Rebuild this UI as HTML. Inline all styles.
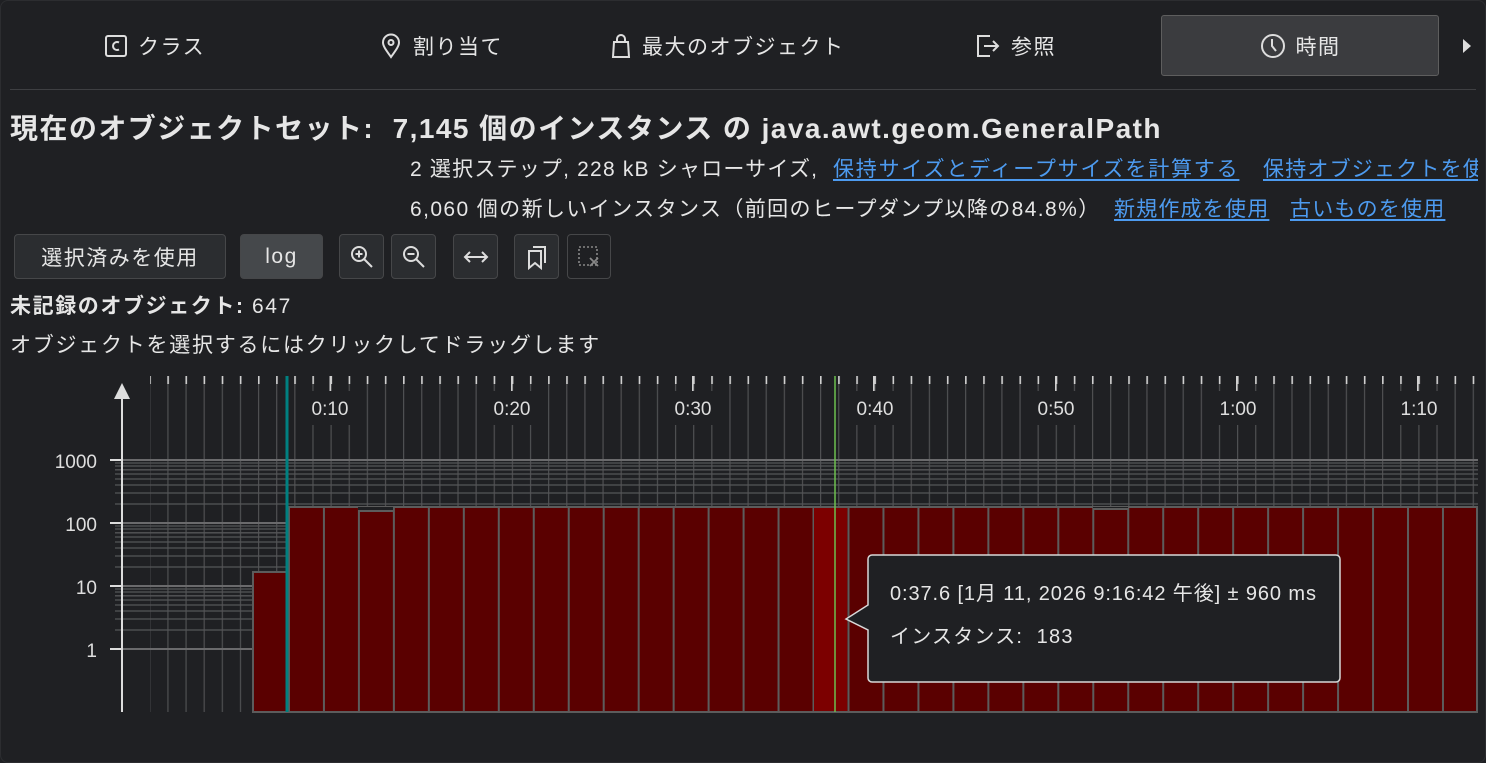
<!DOCTYPE html>
<html><head><meta charset="utf-8"><style>
html,body{margin:0;padding:0;background:#1f2023;}
body{width:1486px;height:763px;overflow:hidden;position:relative;font-family:"Liberation Sans","Noto Sans CJK JP",sans-serif;color:#e6e6e6;}
.abs{position:absolute;white-space:nowrap;}
.tab{position:absolute;top:15px;height:61px;display:flex;align-items:center;font-size:21px;letter-spacing:1.5px;color:#e6e6e6;}
.tab svg{margin-right:10px}
.sel{left:1161px;width:278px;background:#3b3c3f;border:1px solid #5e5e5e;border-radius:3px;justify-content:center;box-sizing:border-box;}
a{color:#4d9bf0;text-decoration:underline;text-underline-offset:3px;}
.t{font-size:21px;letter-spacing:1.2px;}
.btn{position:absolute;top:234px;height:45px;box-sizing:border-box;background:#2b2d30;border:1px solid #464749;border-radius:4px;display:flex;align-items:center;justify-content:center;font-size:21px;letter-spacing:1.5px;color:#e6e6e6;}
</style></head><body>
<div style="position:absolute;inset:0;border:1px solid #2c2d30;border-radius:8px;"></div>

<div class="tab" style="left:104px"><svg width="24" height="24" viewBox="0 0 24 24"><rect x="2" y="2" width="20" height="20" rx="2" fill="none" stroke="#ddd" stroke-width="2"/><path d="M15 8.5a4 4 0 1 0 0 7" fill="none" stroke="#ddd" stroke-width="2"/></svg>クラス</div>
<div class="tab" style="left:379px"><svg width="24" height="26" viewBox="0 0 24 26"><path d="M12 24C7 17 4 13 4 9.5a8 8 0 0 1 16 0C20 13 17 17 12 24z" fill="none" stroke="#ddd" stroke-width="2"/><circle cx="12" cy="9.5" r="2.5" fill="none" stroke="#ddd" stroke-width="2"/></svg>割り当て</div>
<div class="tab" style="left:610px"><svg width="22" height="26" viewBox="0 0 22 26"><path d="M4 9h14l1 15H3z" fill="none" stroke="#ddd" stroke-width="2"/><path d="M7 9V6a4 4 0 0 1 8 0v3" fill="none" stroke="#ddd" stroke-width="2"/></svg>最大のオブジェクト</div>
<div class="tab" style="left:975px"><svg width="26" height="24" viewBox="0 0 26 24"><path d="M15 2H3v20h12" fill="none" stroke="#ddd" stroke-width="2"/><path d="M9 12h14M18 7l5 5-5 5" fill="none" stroke="#ddd" stroke-width="2"/></svg>参照</div>
<div class="tab sel"><svg width="26" height="26" viewBox="0 0 26 26"><circle cx="13" cy="13" r="11" fill="none" stroke="#ddd" stroke-width="2"/><path d="M12 6v7l4 5" fill="none" stroke="#ddd" stroke-width="2"/></svg>時間</div>
<svg class="abs" style="left:1462px;top:38px" width="10" height="16"><path d="M1 1l8 7-8 7z" fill="#ddd"/></svg>
<div class="abs" style="left:10px;top:89px;width:1466px;height:1px;background:#3e3f42"></div>

<div class="abs" style="left:10px;top:107px;font-size:28px;letter-spacing:1.45px;font-weight:bold;">現在のオブジェクトセット:&nbsp; 7,145 個のインスタンス の java.awt.geom.GeneralPath</div>
<div class="abs t" style="left:410px;top:153px;">2 選択ステップ, 228 kB シャローサイズ,</div>
<div class="abs t" style="left:833px;top:153px;letter-spacing:1.8px;"><a>保持サイズとディープサイズを計算する</a></div>
<div class="abs t" style="left:1263px;top:153px;width:215px;overflow:hidden;"><a>保持オブジェクトを使用</a></div>
<div class="abs t" style="left:410px;top:193px;letter-spacing:1.4px;">6,060 個の新しいインスタンス（前回のヒープダンプ以降の84.8%）</div>
<div class="abs t" style="left:1114px;top:193px;"><a>新規作成を使用</a></div>
<div class="abs t" style="left:1290px;top:193px;"><a>古いものを使用</a></div>

<div class="btn" style="left:14px;width:212px;">選択済みを使用</div>
<div class="btn" style="left:240px;width:83px;background:#45484b;">log</div>
<div class="btn" style="left:339px;width:45px;"><svg width="26" height="26" viewBox="0 0 26 26"><circle cx="10" cy="10" r="7" fill="none" stroke="#ddd" stroke-width="2"/><path d="M15 15l8 8M6.5 10h7M10 6.5v7" stroke="#ddd" stroke-width="2"/></svg></div>
<div class="btn" style="left:391px;width:45px;"><svg width="26" height="26" viewBox="0 0 26 26"><circle cx="10" cy="10" r="7" fill="none" stroke="#ddd" stroke-width="2"/><path d="M15 15l8 8M6.5 10h7" stroke="#ddd" stroke-width="2"/></svg></div>
<div class="btn" style="left:453px;width:45px;"><svg width="26" height="14" viewBox="0 0 26 14"><path d="M2 7h22M7 2L2 7l5 5M19 2l5 5-5 5" fill="none" stroke="#ddd" stroke-width="2"/></svg></div>
<div class="btn" style="left:514px;width:45px;"><svg width="22" height="26" viewBox="0 0 22 26"><path d="M3 7h12v17l-6-5-6 5z" fill="none" stroke="#ddd" stroke-width="2"/><path d="M7 3h12v16" fill="none" stroke="#ddd" stroke-width="2"/></svg></div>
<div class="btn" style="left:567px;width:44px;background:#1f2023;"><svg width="26" height="26" viewBox="0 0 26 26"><rect x="3" y="3" width="18" height="18" fill="none" stroke="#888" stroke-width="1.6" stroke-dasharray="2 2"/><path d="M14 14l8 8M22 14l-8 8" stroke="#888" stroke-width="1.8"/></svg></div>

<div class="abs t" style="left:10px;top:290px;letter-spacing:1.6px;"><b>未記録のオブジェクト:</b> 647</div>
<div class="abs t" style="left:10px;top:329px;letter-spacing:1.75px;">オブジェクトを選択するにはクリックしてドラッグします</div>

<svg class="abs" style="left:0;top:0" width="1486" height="763">
<defs>
<pattern id="vg" patternUnits="userSpaceOnUse" x="149.2" y="0" width="18.13" height="763"><rect x="0" y="0" width="1.2" height="763" fill="#4f5052"/></pattern>
<pattern id="vt" patternUnits="userSpaceOnUse" x="149.2" y="0" width="18.13" height="763"><rect x="0" y="0" width="1.6" height="763" fill="#d0d0d0"/></pattern>
<pattern id="bars" patternUnits="userSpaceOnUse" x="253" y="0" width="34.97" height="763"><rect width="34.97" height="763" fill="#5a0000"/><rect width="2" height="763" fill="#5c5c5c"/></pattern>
</defs>
<rect x="150" y="376" width="1328" height="336" fill="url(#vg)"/>
<rect x="150" y="376" width="1328" height="8" fill="url(#vt)"/>
<rect x="300" y="391" width="60" height="34" fill="#1f2023"/>
<rect x="482" y="391" width="60" height="34" fill="#1f2023"/>
<rect x="663" y="391" width="60" height="34" fill="#1f2023"/>
<rect x="844" y="391" width="60" height="34" fill="#1f2023"/>
<rect x="1026" y="391" width="60" height="34" fill="#1f2023"/>
<rect x="1207" y="391" width="62" height="34" fill="#1f2023"/>
<rect x="1388" y="391" width="60" height="34" fill="#1f2023"/>
<g fill="#d0d0d0"><rect x="329.5" y="376" width="1.6" height="15"/><rect x="511" y="376" width="1.6" height="15"/><rect x="692" y="376" width="1.6" height="15"/><rect x="873" y="376" width="1.6" height="15"/><rect x="1055" y="376" width="1.6" height="15"/><rect x="1236" y="376" width="1.6" height="15"/><rect x="1417" y="376" width="1.6" height="15"/></g>
<g fill="#dedede" font-size="19" text-anchor="middle" font-family="Liberation Sans,sans-serif">
<text x="330" y="415">0:10</text><text x="512" y="415">0:20</text><text x="693" y="415">0:30</text><text x="875" y="415">0:40</text><text x="1056" y="415">0:50</text><text x="1238" y="415">1:00</text><text x="1419" y="415">1:10</text>
</g>
<g stroke="#555658" stroke-width="1.3">
<line x1="115" x2="1478" y1="463" y2="463"/><line x1="115" x2="1478" y1="466" y2="466"/><line x1="115" x2="1478" y1="469.8" y2="469.8"/><line x1="115" x2="1478" y1="474" y2="474"/><line x1="115" x2="1478" y1="479" y2="479"/><line x1="115" x2="1478" y1="485" y2="485"/><line x1="115" x2="1478" y1="493" y2="493"/><line x1="115" x2="1478" y1="504" y2="504"/>
<line x1="115" x2="1478" y1="526" y2="526"/><line x1="115" x2="1478" y1="529" y2="529"/><line x1="115" x2="1478" y1="532.8" y2="532.8"/><line x1="115" x2="1478" y1="537" y2="537"/><line x1="115" x2="1478" y1="542" y2="542"/><line x1="115" x2="1478" y1="548" y2="548"/><line x1="115" x2="1478" y1="556" y2="556"/><line x1="115" x2="1478" y1="567" y2="567"/>
<line x1="115" x2="1478" y1="589" y2="589"/><line x1="115" x2="1478" y1="592" y2="592"/><line x1="115" x2="1478" y1="595.8" y2="595.8"/><line x1="115" x2="1478" y1="600" y2="600"/><line x1="115" x2="1478" y1="605" y2="605"/><line x1="115" x2="1478" y1="611" y2="611"/><line x1="115" x2="1478" y1="619" y2="619"/><line x1="115" x2="1478" y1="630" y2="630"/>
</g>
<g stroke="#6a6a6c" stroke-width="2"><line x1="115" x2="1478" y1="460" y2="460"/><line x1="115" x2="1478" y1="523" y2="523"/><line x1="115" x2="1478" y1="586" y2="586"/><line x1="115" x2="1478" y1="649" y2="649"/></g>
<g stroke="#dddddd" stroke-width="2"><line x1="110" x2="122" y1="460" y2="460"/><line x1="110" x2="122" y1="523" y2="523"/><line x1="110" x2="122" y1="586" y2="586"/><line x1="110" x2="122" y1="649" y2="649"/></g>
<rect x="288" y="507" width="1189" height="205" fill="url(#bars)" stroke="#5c5c5c" stroke-width="2"/>
<rect x="358" y="507" width="35" height="4" fill="#1f2023"/>
<line x1="358" x2="393" y1="511" y2="511" stroke="#5c5c5c" stroke-width="2"/>
<rect x="1093" y="507" width="35" height="2" fill="#1f2023"/>
<line x1="1093" x2="1128" y1="509" y2="509" stroke="#5c5c5c" stroke-width="2"/>
<rect x="253" y="572" width="35" height="140" fill="#5a0000" stroke="#5c5c5c" stroke-width="2"/>
<rect x="814" y="508" width="33" height="203" fill="#7c0000"/>
<line x1="287" x2="287" y1="376" y2="712" stroke="#008080" stroke-width="3"/>
<line x1="835" x2="835" y1="376" y2="712" stroke="#6dbf4f" stroke-width="1.5"/>
<line x1="122" x2="122" y1="395" y2="712" stroke="#dddddd" stroke-width="2"/>
<path d="M114 399l8-16 8 16z" fill="#dddddd"/>
<g fill="#dedede" font-size="19" text-anchor="end" font-family="Liberation Sans,sans-serif">
<text x="97" y="468">1000</text><text x="97" y="531">100</text><text x="97" y="594">10</text><text x="97" y="657">1</text>
</g>
<path d="M872 555H1336a4 4 0 0 1 4 4V678a4 4 0 0 1-4 4H872a4 4 0 0 1-4-4V630L846 619L868 605V559a4 4 0 0 1 4-4z" fill="#1f2023" stroke="#d8d8d8" stroke-width="1.5"/>
<text x="890" y="600" fill="#e6e6e6" font-size="20" letter-spacing="0.9" font-family="Liberation Sans,Noto Sans CJK JP,sans-serif">0:37.6 [1月 11, 2026 9:16:42 午後] ± 960 ms</text>
<text x="890" y="643" fill="#e6e6e6" font-size="20" letter-spacing="1.2" font-family="Liberation Sans,Noto Sans CJK JP,sans-serif">インスタンス:&#160; 183</text>
</svg>
</body></html>
